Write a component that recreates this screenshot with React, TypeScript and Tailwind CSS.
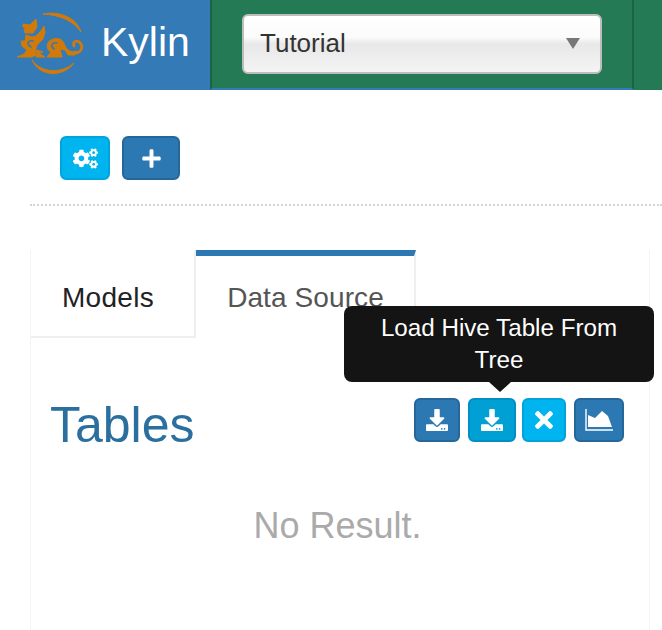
import { FaCogs, FaPlus, FaDownload, FaTimes } from "react-icons/fa";

function Logo() {
  return (
    <svg width="80" height="72" viewBox="0 0 80 72" className="shrink-0">
      <g fill="#d17a0a" stroke="#d17a0a" strokeWidth="1" strokeLinejoin="round">
        <path d="M33 6 C47 3 66 8 71 24 C64 13 50 7 33 6 Z" />
        <path d="M22 52 C30 64 50 67 64 55 C54 69 30 70 22 52 Z" />
        <path d="M13 16 L20 17 L26 11 L27 19 L23 25 L15 25 L14 21 L18 21 L13 19 Z" />
        <path d="M16 27 L22 29 L26 28 L31 23 L34 18 L35 24 L33 31 L27 37 L25 43 L26 47 L22 49 L7 49 L14 46 L17 42 L12 38 L11 33 L15 33 Z" />
        <path d="M26 42 L33 44 L29 45 L35 49 L26 49 L27 46 Z" />
        <path d="M37 49 L41 44 C36 42 36 34 41 32 C47 29 52 31 54 35 C55 39 58 43 62 44 L67 43 L65 47 L58 47 L55 42 L50 41 L52 49 Z" />
      </g>
      <g fill="none" strokeLinecap="round">
        <path d="M60 44 C67 48 74 42 71 36 C68 31 62 33 64 38" stroke="#d17a0a" strokeWidth="2.8" />
        <path d="M21 39 C16 36 18 32 23 33" stroke="#337ab7" strokeWidth="1.6" />
        <path d="M44 41 C40 38 42 34 47 35" stroke="#337ab7" strokeWidth="1.6" />
      </g>
    </svg>
  );
}

function AreaIcon() {
  return (
    <svg width="28" height="22" viewBox="0 0 28 22" fill="none">
      <path d="M3 6 L10 9 L17 2 L23 7 L27 18 L3 18 Z" fill="#fff" />
      <path d="M1 0 V21 H28" stroke="#fff" strokeWidth="1.4" />
    </svg>
  );
}

function IconButton({ className, children }: { className: string; children: React.ReactNode }) {
  return (
    <div className={`flex h-[44px] items-center justify-center rounded-[6px] border-2 text-white ${className}`}>
      {children}
    </div>
  );
}

export default function App() {
  return (
    <div className="relative h-[630px] w-[662px] overflow-hidden bg-white font-['Liberation_Sans',sans-serif]">
      <header className="flex h-[90px]">
        <div className="flex h-[90px] w-[210px] items-center bg-[#337ab7] pb-[2px] pl-[10px]">
          <Logo />
          <span className="ml-[11px] pb-[4px] text-[41px] leading-none text-white">Kylin</span>
        </div>
        <div className="flex h-[90px] w-[424px] items-center border-b-2 border-l-2 border-r-2 border-b-[#337ab7] border-l-[#1c6344] border-r-[#1c6344] bg-[#237a55] pl-[30px]">
          <div className="flex h-[60px] w-[360px] items-center justify-between rounded-[6px] border-2 border-[#bdbdbd] bg-[linear-gradient(to_bottom,#ffffff_0%,#fbfbfb_38%,#e8e8e8_50%,#f4f4f4_100%)] pb-[2px] pl-[16px] pr-[20px]">
            <span className="text-[26px] text-[#333]">Tutorial</span>
            <span className="h-0 w-0 border-x-[7px] border-t-[11px] border-x-transparent border-t-[#777]" />
          </div>
        </div>
        <div className="h-[90px] flex-1 bg-[#237a55]" />
      </header>

      <div className="ml-[30px] flex h-[116px] items-start gap-[12px] border-b-2 border-dotted border-b-[#d4d4d4] pl-[30px] pt-[46px]">
        <IconButton className="w-[50px] border-[#00a3da] bg-[#00b4ef] text-[25px]">
          <FaCogs />
        </IconButton>
        <IconButton className="w-[58px] border-[#26679a] bg-[#2c78b2] text-[21px]">
          <FaPlus />
        </IconButton>
      </div>

      <div className="ml-[30px] mr-[12px] mt-[44px] border-l-[1.5px] border-r-[1.5px] border-[#f4f4f4]">
        <nav className="flex h-[88px]">
          <div className="flex h-[88px] w-[165px] items-center justify-center border-b-2 border-r-2 border-[#efefef] pr-[9px] pt-[10px] text-[28px] tracking-[0.3px] text-[#222]">
            Models
          </div>
          <div className="flex h-[88px] w-[220px] justify-center border-r-2 border-t-[6px] border-r-[#efefef] border-t-[#2c78b2] pl-[1px] pt-[21px] text-[28px] tracking-[0.1px] text-[#555]">
            Data Source
          </div>
        </nav>
        <div className="flex h-[292px] flex-col">
          <div className="flex items-start justify-between pl-[19px] pr-[25px] pt-[60px]">
            <h2 className="text-[50px] font-normal leading-[54px] text-[#2a6f9e]">Tables</h2>
            <div className="flex">
              <IconButton className="w-[46px] border-[#26679a] bg-[#2c78b2] text-[22px]">
                <FaDownload />
              </IconButton>
              <IconButton className="ml-[8px] w-[48px] border-[#008fc4] bg-[#00a0d4] text-[22px]">
                <FaDownload />
              </IconButton>
              <IconButton className="ml-[6px] w-[44px] border-[#00a3da] bg-[#00b4ef] text-[26px]">
                <FaTimes />
              </IconButton>
              <IconButton className="ml-[8px] w-[50px] border-[#26679a] bg-[#2c78b2]">
                <AreaIcon />
              </IconButton>
            </div>
          </div>
          <p className="mr-[5px] mt-[52px] text-center text-[36px] leading-[44px] text-[#aaa]">No Result.</p>
        </div>
      </div>

      <div className="absolute left-[344px] top-[306px] w-[310px] rounded-[8px] bg-[#141414] px-[20px] pb-[6px] pt-[6px] text-center text-[24.2px] leading-[32px] text-white">
        Load Hive Table From Tree
        <span className="absolute left-[145px] top-[76px] h-0 w-0 border-x-[11px] border-t-[10px] border-x-transparent border-t-[#141414]" />
      </div>
    </div>
  );
}
